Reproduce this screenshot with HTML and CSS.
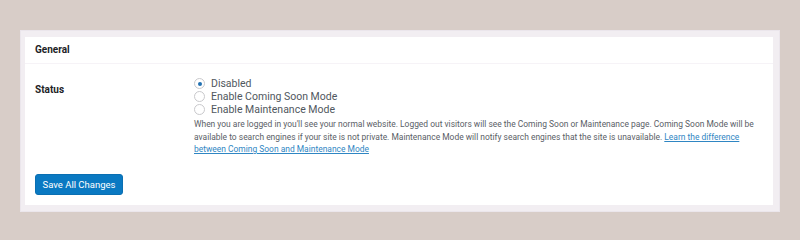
FILE: index.html
```html
<!DOCTYPE html>
<html lang="en">
<head>
    <meta charset="UTF-8">
    <title>General Settings</title>
    <link rel="stylesheet" href="styles.css">
</head>
<body>
    <div class="frame">
        <div class="panel">
            <div class="panel-head">General</div>

            <div class="row">
                <div class="row-label">Status</div>
                <div class="row-field">
                    <label class="radio"><span class="dot checked"></span>Disabled</label>
                    <label class="radio"><span class="dot"></span>Enable Coming Soon Mode</label>
                    <label class="radio"><span class="dot"></span>Enable Maintenance Mode</label>
                    <p class="desc">
                        When you are logged in you'll see your normal website. Logged out visitors will see the Coming Soon or Maintenance page. Coming Soon Mode will be available to search engines if your site is not private. Maintenance Mode will notify search engines that the site is unavailable. <a href="#">Learn the difference between Coming Soon and Maintenance Mode</a>
                    </p>
                </div>
            </div>

            <div class="actions">
                <button class="btn">Save All Changes</button>
            </div>
        </div>
    </div>
</body>
</html>
```

FILE: styles.css
```css
body {
    margin: 0;
    background: #d8cdc8;
    font-family: Roboto, 'Liberation Sans', sans-serif;
    color: #3c434a;
}

/* Outer light frame */
.frame {
    margin: 30px 20px 0 20px;
    width: 748px;
    height: 168px;
    padding: 6px 6px 6px 4px;
    background: #f2eef2;
    border: 1px solid #ebe6ec;
}

.panel {
    background: #fff;
    height: 100%;
}

.panel-head {
    padding: 6px 10px 0 10px;
    height: 20px;
    font-size: 10px;
    font-weight: bold;
    line-height: 13px;
    color: #1d2327;
    border-bottom: 1px solid #f6f3f7;
}

.row {
    display: flex;
    padding: 13px 0 0 10px;
}

.row-label {
    width: 159px;
    padding-top: 7px;
    font-size: 10px;
    font-weight: bold;
    color: #1d2327;
}

.row-field {
    flex: 1;
    padding-right: 12px;
}

.radio {
    display: flex;
    align-items: center;
    height: 13px;
    font-size: 10.5px;
    color: #50575e;
}

.dot {
    box-sizing: border-box;
    width: 11px;
    height: 11px;
    margin-right: 6px;
    border: 1px solid #c9c9cc;
    border-radius: 50%;
    position: relative;
}

    .dot.checked::after {
        content: '';
        position: absolute;
        top: 2.5px;
        left: 2.5px;
        width: 4px;
        height: 4px;
        border-radius: 50%;
        background: #2271b1;
    }

.desc {
    margin: 2px 0 0 0;
    font-size: 8.45px;
    line-height: 12.5px;
    color: #5a6066;
}

    .desc a {
        color: #2f86c3;
    }

.actions {
    padding: 17px 0 0 10px;
}

.btn {
    width: 88px;
    height: 21px;
    padding: 0;
    font-family: Roboto, 'Liberation Sans', sans-serif;
    font-size: 9.5px;
    color: #fff;
    background: #0a79c2;
    border: 1px solid #0a6fb2;
    border-radius: 3px;
}
```
